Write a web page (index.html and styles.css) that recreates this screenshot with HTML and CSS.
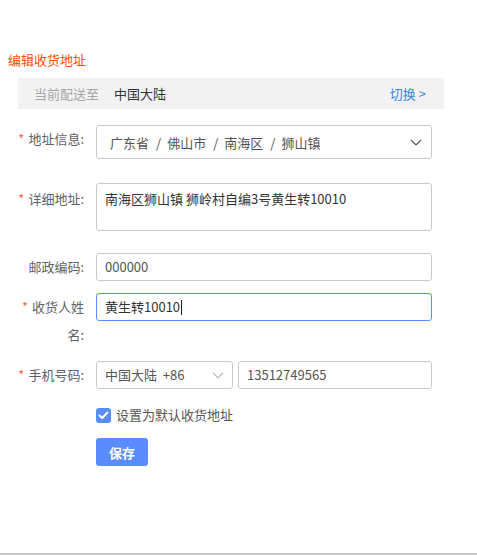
FILE: index.html
```html
<!DOCTYPE html>
<html lang="zh-CN">
<head>
<meta charset="utf-8">
<title>编辑收货地址</title>
<link rel="stylesheet" href="styles.css">
</head>
<body>
<main class="page">
  <h1 class="title">编辑收货地址</h1>
  <div class="ship-bar">
    <span class="ship-label">当前配送至</span>
    <span class="ship-region">中国大陆</span>
    <a class="ship-switch">切换 &gt;</a>
  </div>
  <form class="form">
    <div class="row row-address">
      <label class="label"><span class="req">*</span>地址信息:</label>
      <div class="control select select-address">
        <span class="select-text">广东省<span class="sep">/</span>佛山市<span class="sep">/</span>南海区<span class="sep">/</span>狮山镇</span>
        <svg class="chev chev-dark" width="12" height="7" viewBox="0 0 12 7"><path d="M1 1 L6 6 L11 1" fill="none" stroke="#555" stroke-width="1.2"/></svg>
      </div>
    </div>
    <div class="row row-detail">
      <label class="label"><span class="req">*</span>详细地址:</label>
      <div class="control textarea">南海区狮山镇 狮岭村自编3号黄生转10010</div>
    </div>
    <div class="row row-postal">
      <label class="label">邮政编码:</label>
      <div class="control input input-muted">000000</div>
    </div>
    <div class="row row-name">
      <label class="label"><span class="req">*</span>收货人姓名:</label>
      <div class="control input input-focus">黄生转10010<span class="caret"></span></div>
    </div>
    <div class="row row-phone">
      <label class="label"><span class="req">*</span>手机号码:</label>
      <div class="control phone">
        <div class="input select select-country input-muted">
          <span>中国大陆&nbsp; +86</span>
          <svg class="chev" width="12" height="7" viewBox="0 0 12 7"><path d="M1 1 L6 6 L11 1" fill="none" stroke="#b8b8c0" stroke-width="1.2"/></svg>
        </div>
        <div class="input phone-number input-muted">13512749565</div>
      </div>
    </div>
    <div class="row row-check">
      <div class="label-spacer"></div>
      <div class="check">
        <span class="checkbox"><svg width="11" height="9" viewBox="0 0 11 9"><path d="M1.5 4.5 L4.2 7 L9.5 1.5" fill="none" stroke="#fff" stroke-width="2" stroke-linecap="round" stroke-linejoin="round"/></svg></span>
        <span class="check-text">设置为默认收货地址</span>
      </div>
    </div>
    <div class="row row-submit">
      <div class="label-spacer"></div>
      <button type="button" class="btn">保存</button>
    </div>
  </form>
</main>
<div class="bottom-rule"></div>
</body>
</html>
```

FILE: styles.css
```css
html, body {
  margin: 0;
  padding: 0;
  height: 100%;
}
body {
  display: flex;
  flex-direction: column;
  font-family: "Noto Sans CJK SC", "Noto Sans", sans-serif;
  font-size: 13px;
  color: #333;
  background: #fff;
}
.page {
  flex: 1;
  padding: 0 0 0 8px;
}
.title {
  margin: 50px 0 0 0;
  font-size: 13px;
  font-weight: normal;
  line-height: 20px;
  color: #ff5000;
}
.ship-bar {
  margin: 8px 0 0 10px;
  width: 426px;
  height: 31px;
  box-sizing: border-box;
  padding: 0 18px 0 16px;
  background: #f2f2f2;
  display: flex;
  align-items: center;
}
.ship-label {
  color: #a6a6a6;
  margin-right: 15px;
}
.ship-region {
  color: #333;
}
.ship-switch {
  margin-left: auto;
  color: #3a86d6;
}
.form {
  margin-top: 16px;
}
.row {
  display: flex;
  align-items: flex-start;
}
.label {
  width: 88px;
  box-sizing: border-box;
  padding-right: 12px;
  text-align: right;
  line-height: 28px;
  color: #606266;
  flex: none;
}
.label-spacer {
  width: 88px;
  flex: none;
}
.req {
  color: #f56c4c;
  margin-right: 4px;
}
.control {
  width: 336px;
  box-sizing: border-box;
}
.select, .input, .textarea {
  border: 1px solid #c9c9d3;
  border-radius: 3px;
  box-sizing: border-box;
  background: #fff;
}
.select-address {
  height: 34px;
  display: flex;
  align-items: center;
  padding: 0 9px 0 13px;
  color: #555;
}
.sep {
  color: #555;
  margin: 0 6px 0 7px;
}
.chev {
  margin-left: auto;
}
.row-detail {
  margin-top: 24px;
}
.textarea {
  height: 48px;
  padding: 5px 8px;
  line-height: 20px;
  color: #333;
}
.row-detail .label {
  line-height: 32px;
}
.input {
  height: 28px;
  line-height: 26px;
  padding: 0 8px;
}
.input-muted {
  color: #555;
}
.row-postal {
  margin-top: 22px;
}
.row-name {
  margin-top: 12px;
}
.input-focus {
  border-color: #5b8cff;
  color: #333;
  display: flex;
  align-items: center;
}
.caret {
  display: inline-block;
  width: 1px;
  height: 15px;
  background: #222;
  margin-left: 1px;
}
.row-phone {
  margin-top: 12px;
}
.phone {
  display: flex;
  gap: 5px;
}
.select-country {
  width: 137px;
  display: flex;
  align-items: center;
  padding-right: 8px;
}
.phone-number {
  width: 194px;
}
.row-check {
  margin-top: 18px;
}
.check {
  display: flex;
  align-items: center;
  color: #555;
}
.checkbox {
  width: 15px;
  height: 15px;
  border-radius: 3px;
  background: #5b8cff;
  display: flex;
  align-items: center;
  justify-content: center;
  margin-right: 5px;
}
.check-text {
  line-height: 16px;
}
.row-submit {
  margin-top: 15px;
}
.btn {
  width: 52px;
  height: 28px;
  border: none;
  border-radius: 3px;
  background: #5b8cff;
  color: #fff;
  font-family: inherit;
  font-size: 13px;
  font-weight: bold;
  padding: 0;
}
.bottom-rule {
  height: 2px;
  background: #c6c6c6;
  flex: none;
}
```
